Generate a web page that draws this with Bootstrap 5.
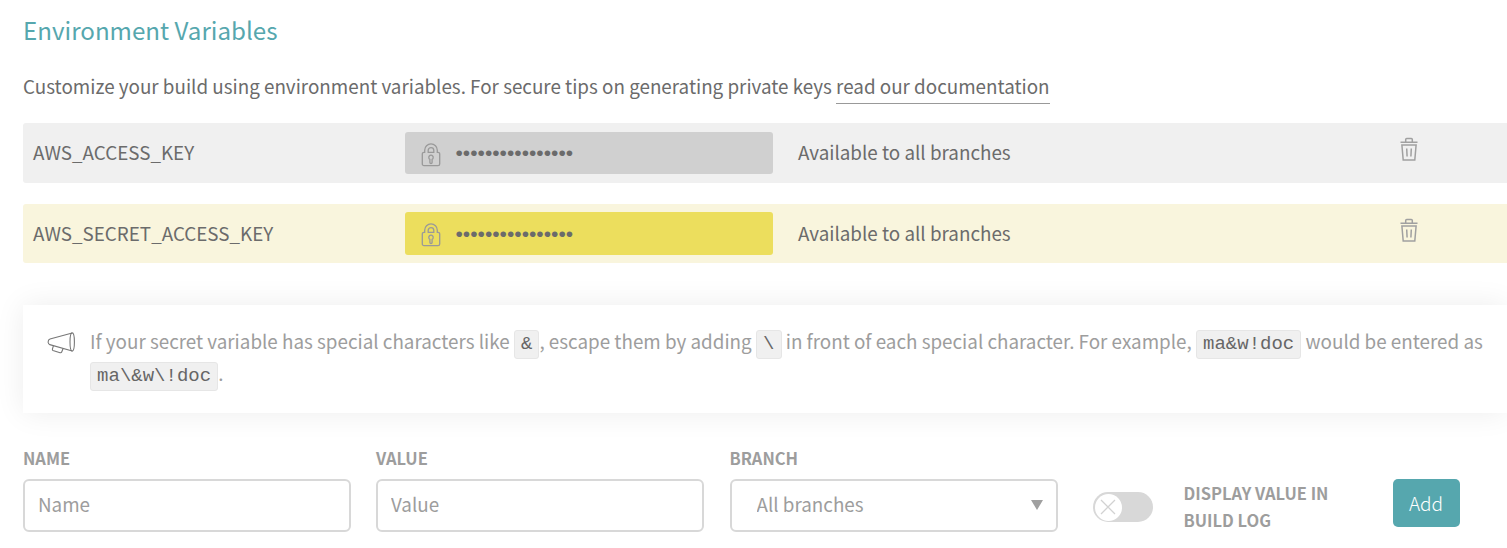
<!DOCTYPE html>
<html lang="en">
<head>
<meta charset="utf-8">
<meta name="viewport" content="width=device-width, initial-scale=1">
<title>Environment Variables</title>
<link href="https://cdn.jsdelivr.net/npm/bootstrap@5.3.0/dist/css/bootstrap.min.css" rel="stylesheet">
<style>
  body { font-family: "Noto Sans CJK SC", "Source Sans Pro", sans-serif; font-size: 18.82px; line-height: 32px; color: #6b6b6b; background: #fff; overflow: hidden; height: 548px; }
  .settings { width: 1507px; padding: 13px 0 0 23px; }
  .page-title { font-size: 24.15px; line-height: 34px; color: #56a7ae; font-weight: 400; margin-bottom: 23px; }
  .intro { margin-bottom: 21px; white-space: nowrap; }
  .intro a { color: inherit; text-decoration: none; border-bottom: 1px solid #999; padding-bottom: 4px; }
  .var-row { height: 60px; background: #f0f0f0; border-radius: 3px 0 0 3px; padding-left: 10px; margin-bottom: 21px; }
  .var-row.is-new { height: 59px; background: #f9f5dd; margin-bottom: 42px; }
  .var-name, .var-scope { padding-bottom: 2px; }
  .var-name { width: 372px; }
  .var-value { width: 368px; height: 42px; background: #d0d0d0; border-radius: 3px; padding-left: 16px; margin-right: 25px; }
  .is-new .var-value { background: #ecde5d; height: 43px; }
  .var-value svg { margin-top: 3px; margin-right: 14.5px; }
  .dots { font: 21px/24px "Liberation Sans", Arial, sans-serif; }
  .var-scope { width: 602px; }
  .var-row .trash { margin-bottom: 7px; }
  .notice { height: 108px; background: #fff; box-shadow: 0 0 28px rgba(0,0,0,.075); padding: 20px 0 0 23px; color: #9d9d9d; margin-bottom: 29px; }
  .notice svg { margin: 7px 13.500px 0 .500px; }
  .notice-text { line-height: 32px; white-space: nowrap; }
  .notice code { font: 19px/26px "Liberation Mono", "Courier New", monospace; color: #666; background: #f0f0f0; border: 1px solid #e6e6e6; border-radius: 3px; display: inline-block; height: 29px; margin: -3px 0; padding: 0 6.100px; vertical-align: baseline; }
  .field { width: 328px; margin-right: 25.5px; }
  .field:first-child { margin-right: 25px; }
  .caps { font-size: 16.5px; font-weight: 700; color: #9d9d9d; line-height: 27px; text-transform: uppercase; }
  .field .caps { display: block; line-height: 32px; margin-bottom: 5px; }
  .field .form-control, .field .form-select { height: 53px; border: 2px solid #d8d8d8; border-radius: 6px; color: #9d9d9d; font-size: 18.82px; line-height: 28px; padding: 0 13px 3px; background-color: #fff; }
  .field .form-control { padding-bottom: 5px; }
  .field .form-control::placeholder { color: #9d9d9d; opacity: 1; }
  .field .form-select { padding-left: 25px; background-image: none; }
  .branch { position: relative; }
  .branch svg { position: absolute; right: 15px; top: 21px; }
  .toggle { width: 60px; height: 30px; border-radius: 15px; background: #d8d8d8; padding-left: 2px; margin: 50px 31px 0 9.5px; }
  .toggle .knob { width: 27px; height: 27px; border-radius: 50%; background: #fff; }
  .toggle-label { width: 209px; margin-top: 38px; }
  .btn-add { width: 67px; height: 48px; margin-top: 37px; border: 0; border-radius: 5px; background: #56a7ae; color: #fff; font-size: 19px; font-weight: 300; line-height: 48px; padding: 0; }
</style>
</head>
<body>
<svg class="d-none">
  <symbol id="lock" viewBox="0 0 19 24" fill="none" stroke="#999" stroke-width="1.3">
    <path d="M3.200 9.300V7.200a6.300 6.300 0 0 1 12.600 0v2.100h.7a1.700 1.700 0 0 1 1.700 1.700v9.900a1.700 1.700 0 0 1-1.700 1.700H2.500A1.700 1.700 0 0 1 .8 20.900V11a1.700 1.700 0 0 1 1.700-1.700z"/>
    <path d="M6.700 9.300V7.400a2.800 2.800 0 0 1 5.600 0v1.900z"/>
    <path d="M8.400 19.500v-3.200a2.200 2.200 0 1 1 2.200 0v3.200a1.100 1 0 0 1-2.200 0z"/>
  </symbol>
  <symbol id="trash" viewBox="0 0 18 25" fill="none" stroke="#a0a0a0" stroke-width="1.500">
    <path d="M.5 5.200h17M5.700 5V2.400q0-1 1-1h4.600q1 0 1 1V5M1.900 8h14.200l-1.300 15H3.200zM6.700 11.500l.4 8M11.300 11.500l-.4 8"/>
  </symbol>
</svg>
<main class="settings">
  <h1 class="page-title">Environment Variables</h1>
  <p class="intro">Customize your build using environment variables. For secure tips on generating private keys <a href="#">read our documentation</a></p>
  <div class="var-row d-flex align-items-center">
    <div class="var-name">AWS_ACCESS_KEY</div>
    <div class="var-value d-flex align-items-center"><svg width="20" height="24"><use href="#lock"/></svg><span class="dots">••••••••••••••••</span></div>
    <div class="var-scope">Available to all branches</div>
    <svg class="trash" width="18" height="25"><use href="#trash"/></svg>
  </div>
  <div class="var-row is-new d-flex align-items-center">
    <div class="var-name">AWS_SECRET_ACCESS_KEY</div>
    <div class="var-value d-flex align-items-center"><svg width="20" height="24"><use href="#lock"/></svg><span class="dots">••••••••••••••••</span></div>
    <div class="var-scope">Available to all branches</div>
    <svg class="trash" width="18" height="25"><use href="#trash"/></svg>
  </div>
  <div class="notice d-flex align-items-start">
    <svg class="flex-shrink-0" width="30" height="23" viewBox="0 0 30 23" fill="none" stroke="#777" stroke-width="1.100">
      <path d="M25.200 1 3 7Q1 7.600 1.100 10.300 1.300 12.200 2.800 12.600L25.200 19"/>
      <ellipse cx="25.200" cy="10" rx="2.200" ry="9.100"/>
      <path d="m6.400 13.800-1 3.300q-.2 1 .6 1.400l7 2.200q1.300.3 1.700-.7l1.400-3.500"/>
    </svg>
    <div class="notice-text">If your secret variable has special characters like <code>&amp;</code>, escape them by adding <code>\</code> in front of each special character. For example, <code>ma&amp;w!doc</code> would be entered as<br><code>ma\&amp;w\!doc</code>.</div>
  </div>
  <form class="d-flex align-items-start">
    <div class="field"><label class="caps" for="name">Name</label><input class="form-control" id="name" placeholder="Name"></div>
    <div class="field"><label class="caps" for="value">Value</label><input class="form-control" id="value" placeholder="Value"></div>
    <div class="field"><label class="caps" for="branch">Branch</label>
      <div class="branch"><select class="form-select" id="branch"><option>All branches</option></select>
        <svg width="12" height="10"><path d="M0 0h12L6 10z" fill="#a0a0a0"/></svg></div>
    </div>
    <div class="toggle d-flex align-items-center"><span class="knob d-flex align-items-center justify-content-center"><svg width="16" height="16" stroke="#d2d2d2" stroke-width="1.300"><path d="m1 1 14 14M15 1 1 15"/></svg></span></div>
    <div class="toggle-label caps">Display value in<br>build log</div>
    <button type="button" class="btn btn-add">Add</button>
  </form>
</main>
<script src="https://cdn.jsdelivr.net/npm/bootstrap@5.3.0/dist/js/bootstrap.bundle.min.js"></script>
</body>
</html>
